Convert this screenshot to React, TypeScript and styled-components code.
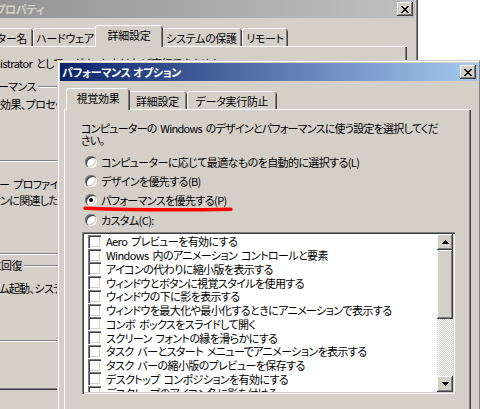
import styled, { createGlobalStyle, css } from 'styled-components';

const face = '#d4d0c8';
const shadow = '#808080';
const darkShadow = '#404040';
const uiFont = `"Noto Sans CJK JP", "Noto Sans", sans-serif`;

const GlobalStyle = createGlobalStyle`
  html, body {
    margin: 0;
    padding: 0;
    background: #fff;
  }
  body {
    font-family: ${uiFont};
    font-size: 11px;
    line-height: 12px;
    letter-spacing: -0.6px;
    word-spacing: 2px;
    font-feature-settings: 'palt';
    color: #000;
  }
`;

const raised = css`
  background: ${face};
  box-shadow: inset -1px -1px ${darkShadow}, inset 1px 1px #fff,
    inset -2px -2px ${shadow}, inset 2px 2px ${face};
`;

const sunken = css`
  box-shadow: inset 1px 1px ${shadow}, inset 2px 2px ${darkShadow},
    inset -1px -1px #fff, inset -2px -2px ${face};
`;

const Desktop = styled.div`
  position: relative;
  width: 480px;
  height: 409px;
  overflow: hidden;
  background: #fff;
`;

// windows sit on the desktop at their own coordinates
const Frame = styled.div<{ $left: number; $top: number; $width: number; $height: number }>`
  position: absolute;
  left: ${(p) => p.$left}px;
  top: ${(p) => p.$top}px;
  width: ${(p) => p.$width}px;
  height: ${(p) => p.$height}px;
  box-sizing: border-box;
  padding: 3px;
  background: ${face};
  box-shadow: inset -1px -1px ${darkShadow}, inset 1px 1px ${face},
    inset -2px -2px ${shadow}, inset 2px 2px #fff;
  display: flex;
  flex-direction: column;
`;

const TitleBar = styled.div<{ $active?: boolean }>`
  height: 18px;
  flex: none;
  display: flex;
  align-items: center;
  justify-content: space-between;
  padding: 0 2px;
  background: ${(p) =>
    p.$active
      ? 'linear-gradient(90deg, #0a246a, #a6caf0)'
      : 'linear-gradient(90deg, #808080, #c0c0c0)'};
  color: ${(p) => (p.$active ? '#fff' : face)};
  font-weight: bold;
  letter-spacing: -0.3px;
  word-spacing: 0;
  white-space: nowrap;
`;

const TitleText = styled.span`
  display: flex;
  align-items: center;
`;

const CloseButton = styled.div`
  ${raised};
  width: 16px;
  height: 14px;
  flex: none;
  display: flex;
  align-items: center;
  justify-content: center;
`;

// text that runs off the left edge of the screen: the prefix is right aligned
// into a fixed width so the visible part lands where it should
const Cut = styled.span<{ $w: number }>`
  display: inline-flex;
  justify-content: flex-end;
  width: ${(p) => p.$w}px;
  white-space: nowrap;
`;

const TabStrip = styled.div<{ $indent: number }>`
  display: flex;
  align-items: flex-end;
  height: 21px;
  flex: none;
  margin: 7px 0 0 ${(p) => p.$indent}px;
  position: relative;
  z-index: 1;
`;

const Tab = styled.div<{ $w: number; $selected?: boolean; $end?: boolean }>`
  box-sizing: border-box;
  width: ${(p) => (p.$selected ? p.$w + 4 : p.$w)}px;
  height: ${(p) => (p.$selected ? 22 : 18)}px;
  margin: 0 ${(p) => (p.$selected ? -2 : 0)}px ${(p) => (p.$selected ? -1 : 0)}px;
  padding: ${(p) => (p.$selected ? '0 0 2px' : '1px 0 0')};
  padding-right: ${(p) => (p.$end ? 6 : 0)}px;
  display: flex;
  align-items: center;
  justify-content: ${(p) => (p.$end ? 'flex-end' : 'center')};
  background: ${face};
  border-radius: 3px 3px 0 0;
  box-shadow: inset 1px 0 #fff, inset 0 1px #fff, inset -1px 0 ${darkShadow},
    inset -2px 0 ${shadow};
  letter-spacing: -0.3px;
  white-space: nowrap;
  overflow: hidden;
  position: relative;
  z-index: ${(p) => (p.$selected ? 2 : 1)};
`;

const TabPage = styled.div<{ $ml: number; $mr: number; $h: number }>`
  box-sizing: border-box;
  flex: none;
  margin: 0 ${(p) => p.$mr}px 0 ${(p) => p.$ml}px;
  height: ${(p) => p.$h}px;
  box-shadow: inset 1px 1px #fff, inset -1px -1px ${darkShadow}, inset -2px -2px ${shadow};
`;

/* ---- system properties (behind) ---- */

const AdvancedPage = styled(TabPage)`
  padding-top: 11px;
`;

const Line = styled.div`
  line-height: 12px;
  white-space: nowrap;
`;

const Group = styled.fieldset<{ $mt: number; $h: number; $pt: number }>`
  box-sizing: border-box;
  margin: ${(p) => p.$mt}px 8px 0 0;
  height: ${(p) => p.$h}px;
  min-width: 0;
  padding: ${(p) => p.$pt}px 9px 0;
  border: 1px solid ${shadow};
  box-shadow: inset 1px 1px #fff, 1px 1px #fff;
`;

const GroupLabel = styled.legend`
  padding: 0 2px;
  line-height: 12px;
  background: ${face};
  white-space: nowrap;
`;

/* ---- performance options (front) ---- */

const VisualPage = styled(TabPage)`
  padding: 14px 0 0 17px;
  position: relative;
`;

const Intro = styled.p`
  margin: 0;
  line-height: 11.5px;
  letter-spacing: -0.75px;
  white-space: nowrap;
`;

const RadioList = styled.div`
  margin-top: 6px;
  display: flex;
  flex-direction: column;
`;

const RadioRow = styled.label`
  position: relative;
  height: 19.4px;
  display: flex;
  align-items: center;
  gap: 4px;
  padding-left: 4px;
  white-space: nowrap;
`;

const RadioDot = styled.span<{ $checked?: boolean }>`
  box-sizing: border-box;
  width: 12px;
  height: 12px;
  flex: none;
  border-radius: 50%;
  background: #fff;
  ${sunken};
  display: flex;
  align-items: center;
  justify-content: center;

  &::after {
    content: '';
    display: ${(p) => (p.$checked ? 'block' : 'none')};
    width: 4px;
    height: 4px;
    border-radius: 50%;
    background: #000;
  }
`;

const Underline = styled.svg`
  position: absolute;
  left: 2px;
  top: 15px;
  overflow: visible;
`;

const ListBox = styled.div`
  box-sizing: border-box;
  width: 373px;
  height: 162px;
  margin: 2px 0 0 1px;
  padding: 2px;
  background: #fff;
  ${sunken};
  display: flex;
`;

const Items = styled.div`
  flex: 1;
  overflow: hidden;
  padding-top: 1px;
`;

const Item = styled.div`
  height: 13.75px;
  display: flex;
  align-items: center;
  gap: 5px;
  padding-left: 4px;
  white-space: nowrap;
`;

const CheckBox = styled.span`
  box-sizing: border-box;
  width: 13px;
  height: 13px;
  flex: none;
  background: #fff;
  ${sunken};
`;

const ScrollBar = styled.div`
  width: 16px;
  flex: none;
  display: flex;
  flex-direction: column;
`;

const ScrollButton = styled.div`
  ${raised};
  height: 16px;
  flex: none;
  display: flex;
  align-items: center;
  justify-content: center;
`;

const Thumb = styled.div`
  ${raised};
  height: 69px;
  flex: none;
`;

const Track = styled.div`
  flex: 1;
  background: repeating-conic-gradient(${face} 0 25%, #fff 0 50%) 0 0 / 2px 2px;
`;

const CloseGlyph = () => (
  <svg width="8" height="7" viewBox="0 0 8 7" shapeRendering="crispEdges">
    <path
      d="M0 0h2v1h1v1h2V1h1V0h2v1H7v1H6v1H5v1h1v1h1v1h1v1H6V6H5V5H3v1H2v1H0V6h1V5h1V4h1V3H2V2H1V1H0z"
      fill="#000"
    />
  </svg>
);

const Arrow = ({ down }: { down?: boolean }) => (
  <svg
    width="7"
    height="4"
    viewBox="0 0 7 4"
    shapeRendering="crispEdges"
    style={down ? { transform: 'scaleY(-1)' } : undefined}
  >
    <path d="M3 0h1v1h1v1h1v1h1v1H0V3h1V2h1V1h1z" fill="#000" />
  </svg>
);

const effects = [
  'Aero プレビューを有効にする',
  'Windows 内のアニメーション コントロールと要素',
  'アイコンの代わりに縮小版を表示する',
  'ウィンドウとボタンに視覚スタイルを使用する',
  'ウィンドウの下に影を表示する',
  'ウィンドウを最大化や最小化するときにアニメーションで表示する',
  'コンボ ボックスをスライドして開く',
  'スクリーン フォントの縁を滑らかにする',
  'タスク バーとスタート メニューでアニメーションを表示する',
  'タスク バーの縮小版のプレビューを保存する',
  'デスクトップ コンポジションを有効にする',
  'デスクトップのアイコン名に影を付ける',
  'ドラッグ中にウィンドウの内容を表示する',
  'ヒントをフェードまたはスライドで表示する',
];

const modes = [
  { label: 'コンピューターに応じて最適なものを自動的に選択する(L)' },
  { label: 'デザインを優先する(B)' },
  { label: 'パフォーマンスを優先する(P)', checked: true },
  { label: 'カスタム(C):' },
];

const App = () => {
  return (
    <>
      <GlobalStyle />
      <Desktop>
        <Frame $left={-200} $top={-3} $width={618} $height={420}>
          <TitleBar>
            <TitleText>
              <Cut $w={190}>システムの</Cut>プロパティ
            </TitleText>
            <CloseButton>
              <CloseGlyph />
            </CloseButton>
          </TitleBar>
          <TabStrip $indent={47}>
            <Tab $w={183} $end>
              コンピューター名
            </Tab>
            <Tab $w={64}>ハードウェア</Tab>
            <Tab $w={64} $selected>
              詳細設定
            </Tab>
            <Tab $w={81}>システムの保護</Tab>
            <Tab $w={46}>リモート</Tab>
          </TabStrip>
          <AdvancedPage $ml={47} $mr={8} $h={344}>
            <Line>
              <Cut $w={150}>これらの変更の大部分は、Adm</Cut>istrator としてログオンしなければ実行できません。
            </Line>
            <Group $mt={11} $h={81} $pt={6}>
              <GroupLabel>
                <Cut $w={136}>パフォ</Cut>ーマンス
              </GroupLabel>
              <Line>
                <Cut $w={140}>視覚</Cut>効果、プロセッサのスケジュール、メモリ使用、および仮想メモリ
              </Line>
            </Group>
            <Group $mt={17} $h={76} $pt={4}>
              <GroupLabel>
                <Cut $w={137}>ユーザ</Cut>ー プロファイル
              </GroupLabel>
              <Line>
                <Cut $w={140}>ログオ</Cut>ンに関連したデスクトップ設定
              </Line>
            </Group>
            <Group $mt={5} $h={82} $pt={11}>
              <GroupLabel>
                <Cut $w={130}>起動</Cut>と回復
              </GroupLabel>
              <Line>
                <Cut $w={139}>システ</Cut>ム起動、システム エラー、およびデバッグ情報
              </Line>
            </Group>
          </AdvancedPage>
        </Frame>

        <Frame $left={57} $top={60} $width={424} $height={360}>
          <TitleBar $active>
            <TitleText>パフォーマンス オプション</TitleText>
            <CloseButton>
              <CloseGlyph />
            </CloseButton>
          </TitleBar>
          <TabStrip $indent={8}>
            <Tab $w={60} $selected>
              視覚効果
            </Tab>
            <Tab $w={59}>詳細設定</Tab>
            <Tab $w={90}>データ実行防止</Tab>
          </TabStrip>
          <VisualPage $ml={4} $mr={7} $h={320}>
            <Intro>
              コンピューターの Windows のデザインとパフォーマンスに使う設定を選択してくだ
              <br />
              さい。
            </Intro>
            <RadioList>
              {modes.map((m) => (
                <RadioRow key={m.label}>
                  <RadioDot $checked={m.checked} />
                  {m.label}
                  {m.checked && (
                    <Underline width="150" height="6" viewBox="0 0 150 6">
                      <path
                        d="M2 2.2 Q70 4.6 148 3.2"
                        fill="none"
                        stroke="#f00"
                        strokeWidth="3.4"
                        strokeLinecap="round"
                      />
                    </Underline>
                  )}
                </RadioRow>
              ))}
            </RadioList>
            <ListBox>
              <Items>
                {effects.map((e) => (
                  <Item key={e}>
                    <CheckBox />
                    {e}
                  </Item>
                ))}
              </Items>
              <ScrollBar>
                <ScrollButton>
                  <Arrow />
                </ScrollButton>
                <Thumb />
                <Track />
                <ScrollButton>
                  <Arrow down />
                </ScrollButton>
              </ScrollBar>
            </ListBox>
          </VisualPage>
        </Frame>
      </Desktop>
    </>
  );
};

export default App;
